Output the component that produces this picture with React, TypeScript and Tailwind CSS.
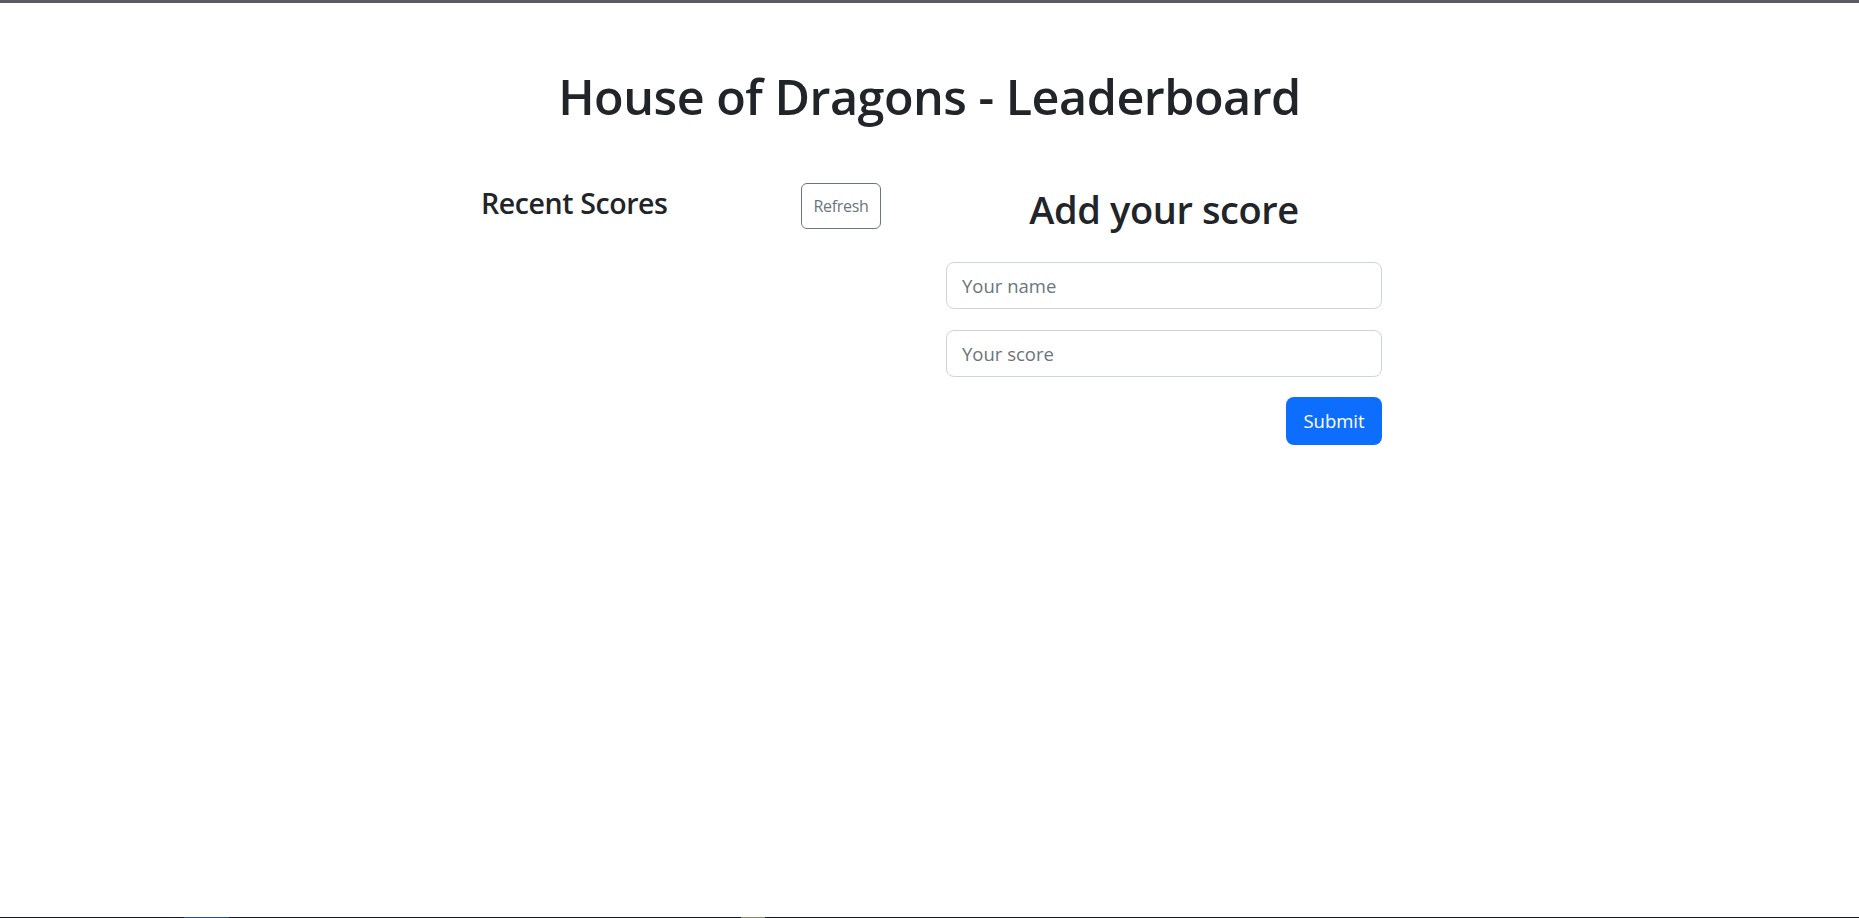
export default function App() {
  return (
    <div className="min-h-[918px] w-full bg-white flex flex-col font-['Open_Sans',sans-serif] text-[#212529]">
      {/* window top edge */}
      <div className="h-[3px] bg-[#5a5a62]" />

      <main className="flex-1 flex flex-col items-center">
        <h1 className="mt-[64px] text-[48.5px] font-semibold leading-[1.2] tracking-[-0.5px]">
          House of Dragons - Leaderboard
        </h1>

        <div className="mt-[61px] w-[905px] pl-[4px] flex gap-[65px]">
          {/* Recent scores */}
          <section className="w-[400px] flex items-start justify-between">
            <h4 className="text-[28.5px] font-semibold leading-[1.2] tracking-[-0.4px]">Recent Scores</h4>
            <button className="-mt-[3px] h-[46px] w-[80px] rounded-[6px] border border-[#6c757d] text-[16px] text-[#6c757d] tracking-[-0.3px]">
              Refresh
            </button>
          </section>

          {/* Add score */}
          <section className="w-[436px] flex flex-col">
            <h2 className="mt-[1px] text-center text-[38px] font-semibold leading-[1.2] tracking-[-0.4px]">Add your score</h2>
            <input
              placeholder="Your name"
              className="mt-[29px] h-[47px] w-full rounded-[8px] border border-[#ced4da] px-[15px] text-[18.5px] text-[#212529] outline-none placeholder:text-[#6c757d]"
            />
            <input
              placeholder="Your score"
              className="mt-[21px] h-[47px] w-full rounded-[8px] border border-[#ced4da] px-[15px] text-[18.5px] text-[#212529] outline-none placeholder:text-[#6c757d]"
            />
            <div className="mt-[20px] flex justify-end">
              <button className="h-[48px] w-[96px] rounded-[8px] bg-[#0d6efd] text-[18.5px] text-white">
                Submit
              </button>
            </div>
          </section>
        </div>
      </main>

      {/* taskbar edge */}
      <div className="h-[1px] flex bg-[#0f1a2a]">
        <div className="ml-[184px] w-[45px] bg-[#1f4f8f]" />
        <div className="ml-[512px] w-[24px] bg-[#8a8560]" />
      </div>
    </div>
  );
}
